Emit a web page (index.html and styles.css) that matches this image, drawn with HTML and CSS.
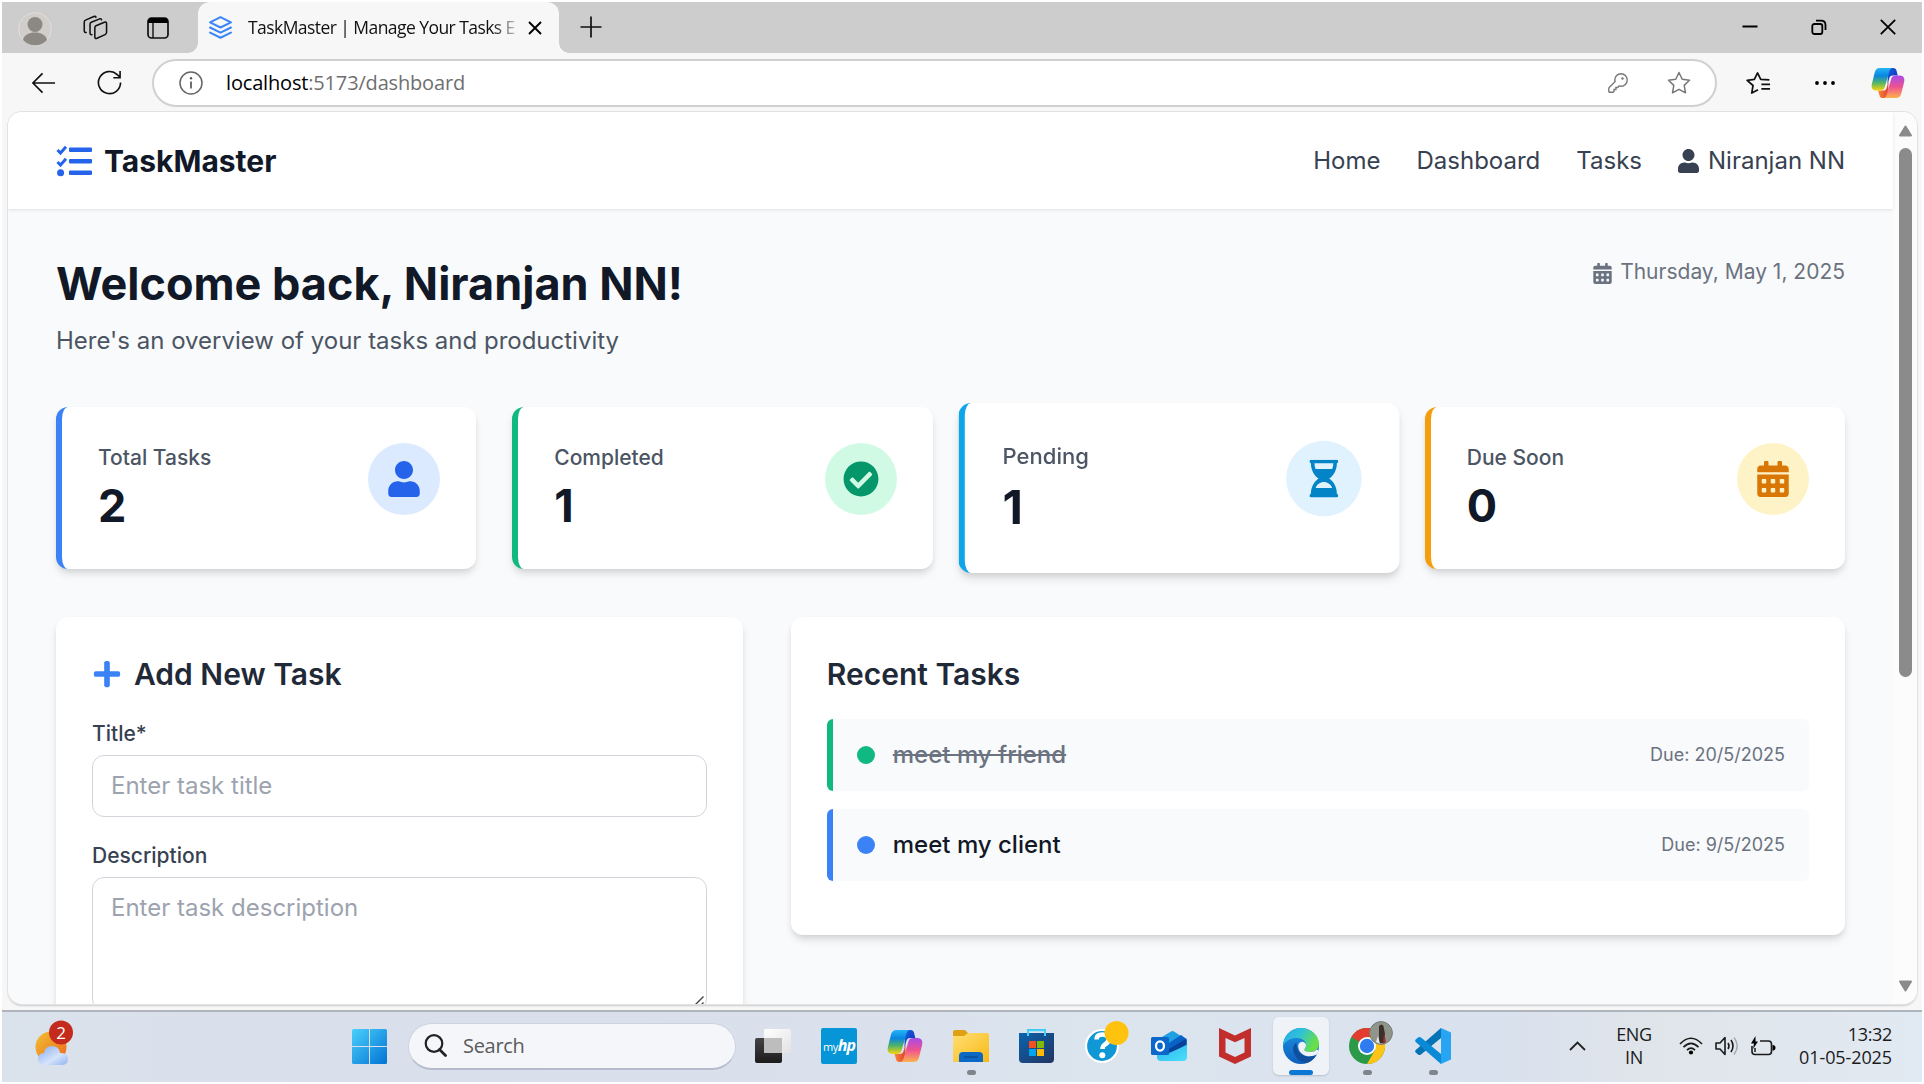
FILE: index.html
```html
<!DOCTYPE html>
<html lang="en">
<head>
<meta charset="utf-8">
<title>TaskMaster | Manage Your Tasks Efficiently</title>
<link rel="stylesheet" href="styles.css">
</head>
<body>
<svg class="defs" width="0" height="0" aria-hidden="true">
  <defs>
    <linearGradient id="cpA" x1="0" y1="0" x2="0" y2="1"><stop offset="0" stop-color="#23b5f5"/><stop offset=".35" stop-color="#0a86e0"/><stop offset=".65" stop-color="#4fb36a"/><stop offset="1" stop-color="#f7d50c"/></linearGradient>
    <linearGradient id="cpB" x1="0" y1="0" x2="0" y2="1"><stop offset="0" stop-color="#a64bea"/><stop offset=".5" stop-color="#ee5290"/><stop offset="1" stop-color="#fdb34d"/></linearGradient>
    <linearGradient id="cpC" x1="0" y1="0" x2="1" y2="1"><stop offset="0" stop-color="#1a5fe0"/><stop offset="1" stop-color="#0a2fb4"/></linearGradient>
    <linearGradient id="cpD" x1="0" y1="0" x2="1" y2="0"><stop offset="0" stop-color="#f9873a"/><stop offset="1" stop-color="#e2402f"/></linearGradient>
    <linearGradient id="sun" x1="0" y1="0" x2="1" y2="1"><stop offset="0" stop-color="#efc232"/><stop offset="1" stop-color="#f0641e"/></linearGradient>
    <linearGradient id="cloud" x1="0" y1="0" x2="1" y2="1"><stop offset="0" stop-color="#86abf0"/><stop offset=".6" stop-color="#d5e3fb"/><stop offset="1" stop-color="#8fb3f0"/></linearGradient>
    <linearGradient id="win" x1="0" y1="0" x2="1" y2="1"><stop offset="0" stop-color="#4bd0fb"/><stop offset="1" stop-color="#0273d4"/></linearGradient>
    <linearGradient id="tvw" x1="0" y1="0" x2="1" y2="1"><stop offset="0" stop-color="#fff"/><stop offset="1" stop-color="#e2e2e2"/></linearGradient>
    <linearGradient id="tvb" x1="0" y1="0" x2="0" y2="1"><stop offset="0" stop-color="#444"/><stop offset="1" stop-color="#1c1c1c"/></linearGradient>
    <linearGradient id="fold" x1="0" y1="0" x2="1" y2="1"><stop offset="0" stop-color="#ffdf75"/><stop offset="1" stop-color="#f9b916"/></linearGradient>
    <linearGradient id="store" x1="0" y1="0" x2="1" y2="1"><stop offset="0" stop-color="#0a63ae"/><stop offset="1" stop-color="#243460"/></linearGradient>
    <linearGradient id="edgeTop" x1="0" y1="0" x2="1" y2=".4"><stop offset="0" stop-color="#2aa7e8"/><stop offset=".5" stop-color="#2fc2d8"/><stop offset="1" stop-color="#69df45"/></linearGradient>
    <linearGradient id="edgeL" x1="0" y1="0" x2="0" y2="1"><stop offset="0" stop-color="#1e93e4"/><stop offset="1" stop-color="#0d60bd"/></linearGradient>
    <linearGradient id="olk" x1="0" y1="0" x2="1" y2="1"><stop offset="0" stop-color="#2bb3ea"/><stop offset="1" stop-color="#4be0fd"/></linearGradient>
    <symbol id="copilot" viewBox="0 0 36 34">
      <path d="M18 1h5.500c2 0 3 1 3.500 2.800L28.300 9H23c-2 0-3 1-3.600 3l-2 7z" fill="url(#cpC)"/>
      <path d="M18 33h-5.500c-2 0-3-1-3.500-2.800L7.500 25H13c2 0 3-1 3.600-3l2-7z" fill="url(#cpD)"/>
      <path d="M9.500 1H23c-2 .3-2.900 1.500-3.500 3.500l-4.700 16.200c-.8 2.800-2 4.300-5 4.300H5.500C1.500 25 0 22 .9 18L4 5.500C4.800 2.500 6.500 1 9.500 1z" fill="url(#cpA)"/>
      <path d="M26.500 33H13c2-.3 2.900-1.500 3.500-3.500l4.700-16.200c.8-2.800 2-4.300 5-4.300h4.300c4 0 5.500 3 4.600 7L32 28.500c-.8 3-2.500 4.500-5.500 4.500z" fill="url(#cpB)"/>
    </symbol>
    <symbol id="user" viewBox="0 0 448 512"><path d="M224 256c70.700 0 128-57.300 128-128S294.700 0 224 0 96 57.300 96 128s57.300 128 128 128zm89.600 32h-16.700c-22.200 10.200-46.900 16-72.900 16s-50.600-5.800-72.900-16h-16.700C60.200 288 0 348.200 0 422.400V464c0 26.500 21.500 48 48 48h352c26.500 0 48-21.500 48-48v-41.600c0-74.200-60.200-134.400-134.400-134.400z"/></symbol>
    <symbol id="calendar" viewBox="0 0 448 512"><path d="M0 464c0 26.500 21.500 48 48 48h352c26.500 0 48-21.500 48-48V192H0v272zm320-196c0-6.600 5.400-12 12-12h40c6.600 0 12 5.400 12 12v40c0 6.600-5.400 12-12 12h-40c-6.600 0-12-5.400-12-12v-40zm0 128c0-6.600 5.400-12 12-12h40c6.600 0 12 5.400 12 12v40c0 6.600-5.400 12-12 12h-40c-6.600 0-12-5.400-12-12v-40zM192 268c0-6.600 5.400-12 12-12h40c6.600 0 12 5.400 12 12v40c0 6.600-5.400 12-12 12h-40c-6.600 0-12-5.400-12-12v-40zm0 128c0-6.600 5.400-12 12-12h40c6.600 0 12 5.400 12 12v40c0 6.600-5.400 12-12 12h-40c-6.600 0-12-5.400-12-12v-40zM64 268c0-6.600 5.400-12 12-12h40c6.600 0 12 5.400 12 12v40c0 6.600-5.400 12-12 12H76c-6.600 0-12-5.400-12-12v-40zm0 128c0-6.600 5.400-12 12-12h40c6.600 0 12 5.400 12 12v40c0 6.600-5.400 12-12 12H76c-6.600 0-12-5.400-12-12v-40zM400 64h-48V16c0-8.800-7.200-16-16-16h-32c-8.800 0-16 7.200-16 16v48H160V16c0-8.800-7.200-16-16-16h-32c-8.800 0-16 7.200-16 16v48H48C21.500 64 0 85.500 0 112v48h448v-48c0-26.500-21.500-48-48-48z"/></symbol>
  </defs>
</svg>

<div class="screen">
  <header class="tabstrip">
    <svg class="avatar" viewBox="0 0 34 34"><circle cx="17" cy="17" r="16.300" fill="#d0cdca" stroke="#e2e0de"/><circle cx="17" cy="12.500" r="7.500" fill="#8c8884"/><path d="M5 28c1-5 6-7.500 12-7.500S28 23 29 28c-3 3.500-7.500 5.300-12 5.300S8 31.500 5 28z" fill="#8c8884"/></svg>
    <svg class="workspaces" viewBox="0 0 26 26"><g fill="none" stroke="#111" stroke-width="1.600" stroke-linejoin="round" stroke-linecap="round"><path d="M13.500 11.200l8.700-3.700q2.300-.7 2.300 1.500v9q0 1.700-1.500 2.400l-8.500 3.800q-2.200.7-2.200-1.500v-9.300q0-1.500 1.200-2.200z"/><path d="M9.300 20.500q-2 .3-2-1.700v-9q0-1.600 1.300-2.200l8.700-3.600q1.700-.5 2 1"/><path d="M3.300 18.200q-2 .2-2-1.700v-9q0-1.600 1.300-2.200L11.300 1.600q1.700-.6 2.200.6"/></g></svg>
    <svg class="vtabs" viewBox="0 0 22 22"><rect x="1" y="1" width="20" height="20" rx="3.500" fill="none" stroke="#111" stroke-width="1.700"/><path d="M1 4.500Q1 1 4.500 1h13Q21 1 21 4.500V6H1z"/><path d="M6 6v15" stroke="#111" stroke-width="1.400"/></svg>
    <div class="tab">
      <svg class="favicon" viewBox="0 0 22 22" fill="none" stroke="#3b86f7" stroke-width="1.900" stroke-linejoin="round" stroke-linecap="round"><path d="M11 1l10 5-10 5L1 6z"/><path d="M1 11l10 5 10-5M1 15.800l10 5 10-5"/></svg>
      <span class="tab-title">TaskMaster | Manage Your Tasks E</span>
      <svg class="tab-close" viewBox="0 0 14 14"><path d="M1 1l12 12M13 1L1 13" stroke="#000" stroke-width="1.900"/></svg>
    </div>
    <svg class="newtab" viewBox="0 0 22 22"><path d="M11 .5v21M.5 11h21" stroke="#111" stroke-width="1.700"/></svg>
    <div class="wincontrols">
      <svg viewBox="0 0 16 16"><path d="M.5 7.500h15" stroke="#000" stroke-width="2"/></svg>
      <svg viewBox="0 0 16 16" fill="none" stroke="#000" stroke-width="1.800"><rect x="1.300" y="5" width="10" height="10" rx="2"/><path d="M5 1.700h5q4.500 0 4.500 4.500V11"/></svg>
      <svg viewBox="0 0 16 16"><path d="M.8.800l14.400 14.400M15.200.8L.8 15.200" stroke="#000" stroke-width="1.800"/></svg>
    </div>
  </header>

  <div class="toolbar">
    <svg class="back" viewBox="0 0 26 22"><path d="M25 11H2M12 1L2 11l10 10" fill="none" stroke="#111" stroke-width="1.700"/></svg>
    <svg class="reload" viewBox="0 0 26 26"><path d="M24.500 13A11.500 11.500 0 1 1 21 4.800L24 7.500M24 1v7h-7" fill="none" stroke="#111" stroke-width="1.700"/></svg>
    <div class="address">
      <svg class="info" viewBox="0 0 24 24"><circle cx="12" cy="12" r="11" fill="none" stroke="#666" stroke-width="1.500"/><path d="M12 10.500v7" stroke="#555" stroke-width="1.700"/><circle cx="12" cy="7.200" r="1.200" fill="#555"/></svg>
      <span class="url">localhost<span class="path">:5173/dashboard</span></span>
      <svg class="key" viewBox="0 0 20 20"><path d="M13 .8a6.200 6.200 0 0 1 0 12.400q-1 0-1.800-.3l-1.400 1.600H7.900v2H6v2l-.8.700H1.500q-.7 0-.7-.7v-3q0-.6.400-1l6-6Q6.800 7.800 6.800 7A6.200 6.200 0 0 1 13 .8z" fill="none" stroke="#777" stroke-width="1.400"/><circle cx="14.500" cy="5.500" r="1.200" fill="#777"/></svg>
      <svg class="star" viewBox="0 0 24 24"><path d="M12 1.500l3.200 6.700 7.300 1-5.300 5.200 1.300 7.400-6.500-3.500-6.500 3.500 1.300-7.400L1.500 9.200l7.300-1z" fill="none" stroke="#777" stroke-width="1.500" stroke-linejoin="round"/></svg>
    </div>
    <svg class="favs" viewBox="0 0 26 24"><path d="M12.500 19l-6.500 3.500 1.300-7.900L1.200 9.200l7.500-1L12 1.500l3.300 6.700 9 .6M16 13.500h9M16 18h9" fill="none" stroke="#111" stroke-width="1.800" stroke-linejoin="round"/></svg>
    <svg class="more" viewBox="0 0 20 4"><circle cx="2" cy="2" r="1.900"/><circle cx="10" cy="2" r="1.900"/><circle cx="18" cy="2" r="1.900"/></svg>
    <svg class="copilot-btn"><use href="#copilot"/></svg>
  </div>

  <div class="viewport">
    <div class="page">
      <nav class="navbar">
        <div class="brand">
          <svg class="brand-icon" viewBox="0 0 36 32"><g fill="#2563eb"><rect x="13" y="2.500" width="23" height="4.600" rx="1"/><rect x="13" y="14" width="23" height="4.600" rx="1"/><rect x="13" y="25.500" width="23" height="4.600" rx="1"/><circle cx="4.600" cy="27.800" r="3.500"/></g><path d="M1.500 5L4.500 8 10 1.800M1.500 17l3 3L10 13.800" fill="none" stroke="#2563eb" stroke-width="3"/></svg>
          <span>TaskMaster</span>
        </div>
        <div class="links">
          <a>Home</a><a>Dashboard</a><a>Tasks</a>
          <a class="profile"><svg><use href="#user"/></svg>Niranjan NN</a>
        </div>
      </nav>
      <main class="content">
        <section class="intro">
          <div>
            <h1>Welcome back, Niranjan NN!</h1>
            <p>Here's an overview of your tasks and productivity</p>
          </div>
          <div class="date"><svg><use href="#calendar"/></svg>Thursday, May 1, 2025</div>
        </section>

        <section class="stats">
          <article class="stat total">
            <div><h2>Total Tasks</h2><strong>2</strong></div>
            <span class="badge"><svg><use href="#user"/></svg></span>
          </article>
          <article class="stat completed">
            <div><h2>Completed</h2><strong>1</strong></div>
            <span class="badge"><svg viewBox="0 0 512 512"><path d="M504 256c0 137-111 248-248 248S8 393 8 256 119 8 256 8s248 111 248 248zM227.300 387.300l184-184c6.200-6.200 6.200-16.400 0-22.600l-22.600-22.600c-6.200-6.200-16.400-6.200-22.600 0L216 308.100l-70.100-70.100c-6.200-6.200-16.400-6.200-22.600 0l-22.600 22.600c-6.200 6.200-6.200 16.400 0 22.600l104 104c6.200 6.200 16.400 6.200 22.600.1z"/></svg></span>
          </article>
          <article class="stat pending">
            <div><h2>Pending</h2><strong>1</strong></div>
            <span class="badge"><svg viewBox="0 0 384 512"><path d="M368 48c8.800 0 16-7.200 16-16V16c0-8.800-7.200-16-16-16H16C7.200 0 0 7.200 0 16v16c0 8.800 7.200 16 16 16 0 91.900 44.200 169.400 104.800 208C60.200 294.600 16 372.100 16 464c-8.800 0-16 7.200-16 16v16c0 8.800 7.200 16 16 16h352c8.800 0 16-7.200 16-16v-16c0-8.800-7.200-16-16-16 0-91.900-44.200-169.400-104.800-208C323.800 217.400 368 139.900 368 48zM304 384H80c16.900-46.400 59.700-80 112-80s95.100 33.600 112 80zm0-256H80c-10.400-24.400-16-51.400-16-80h256c0 28.600-5.600 55.600-16 80z"/></svg></span>
          </article>
          <article class="stat due">
            <div><h2>Due Soon</h2><strong>0</strong></div>
            <span class="badge"><svg><use href="#calendar"/></svg></span>
          </article>
        </section>

        <section class="panels">
          <form class="panel">
            <h3><svg viewBox="0 0 448 512"><path d="M416 208H272V64c0-17.700-14.300-32-32-32h-32c-17.700 0-32 14.300-32 32v144H32c-17.700 0-32 14.300-32 32v32c0 17.700 14.300 32 32 32h144v144c0 17.700 14.300 32 32 32h32c17.700 0 32-14.300 32-32V304h144c17.700 0 32-14.300 32-32v-32c0-17.700-14.300-32-32-32z"/></svg>Add New Task</h3>
            <label>Title*</label>
            <input class="field" type="text" placeholder="Enter task title">
            <label>Description</label>
            <div class="area">
              <textarea class="field" rows="3" placeholder="Enter task description"></textarea>
              <svg class="grip" viewBox="0 0 14 14"><path d="M1.500 12.500l11-11M7.500 12.500l5-5" stroke="#444" stroke-width="1.400"/></svg>
            </div>
          </form>
          <div class="panel recent">
            <h3>Recent Tasks</h3>
            <div class="task done"><i></i><span>meet my friend</span><time>Due: 20/5/2025</time></div>
            <div class="task"><i></i><span>meet my client</span><time>Due: 9/5/2025</time></div>
          </div>
        </section>
      </main>
    </div>
    <div class="scrollbar">
      <svg class="arrow" viewBox="0 0 14 12"><path d="M7 1.500L12.500 10.500h-11z" fill="#8b8b8b" stroke="#8b8b8b" stroke-width="2" stroke-linejoin="round"/></svg>
      <div class="thumb"></div>
      <svg class="arrow" viewBox="0 0 14 12"><path d="M7 10.500L12.500 1.500h-11z" fill="#8b8b8b" stroke="#8b8b8b" stroke-width="2" stroke-linejoin="round"/></svg>
    </div>
  </div>

  <footer class="taskbar">
    <div class="weather">
      <svg viewBox="0 0 40 46"><circle cx="17" cy="27" r="15.500" fill="url(#sun)"/><path d="M11 45q-7 0-7-6.500 0-5 6-5.500Q11 26 18 26q7 0 8 7 8-.5 8 6 0 6-7 6z" fill="url(#cloud)"/><circle cx="27" cy="12.500" r="12" fill="#c42b1c"/></svg>
      <b>2</b>
    </div>
    <svg class="start" viewBox="0 0 35 35"><path d="M1.500 0H17v17H0V1.500Q0 0 1.500 0zM18 0h15.500Q35 0 35 1.500V17H18zM0 18h17v17H1.500Q0 35 0 33.500zM18 18h17v15.500q0 1.500-1.500 1.500H18z" fill="url(#win)"/></svg>
    <div class="search"><svg viewBox="0 0 23 23"><circle cx="10" cy="9.500" r="8.300" fill="none" stroke="#222" stroke-width="2.200"/><path d="M15.500 15.500l6 6" stroke="#222" stroke-width="2.800" stroke-linecap="round"/></svg>Search</div>
    <div class="apps">
      <div class="app"><svg viewBox="0 0 36 36"><path d="M0 12q0-2 2-2h25v23q0 2-2 2H2q-2 0-2-2z" fill="url(#tvb)"/><rect x="9" y="1" width="27" height="24" rx="1.500" fill="url(#tvw)"/><path d="M9 10h18v15H10q-1 0-1-1z" fill="#bdbdbd"/></svg></div>
      <div class="app"><span class="myhp">my<b>hp</b></span></div>
      <div class="app"><svg><use href="#copilot"/></svg></div>
      <div class="app running"><svg viewBox="0 0 36 36"><path d="M0 4q0-2 2-2h10l4 4h18v8H0z" fill="#dfa012"/><path d="M0 8h11l4-3h19q2 0 2 2v27H0z" fill="url(#fold)"/><path d="M6 34V28q0-4 4-4h16q4 0 4 4v6z" fill="#0b68c4"/><path d="M11 29h14" stroke="#0a4d96" stroke-width="1.500"/></svg></div>
      <div class="app"><svg viewBox="0 0 36 36"><path d="M9 9V2h17v7" fill="none" stroke="#25bdf0" stroke-width="2"/><path d="M0 5h35v26q0 4-4 4H4q-4 0-4-4z" fill="url(#store)"/><path d="M9 8V2.200h17V8" fill="none" stroke="#48cff5" stroke-width="2"/><path d="M10 13h7v7h-7z" fill="#f25022"/><path d="M18 13h7v7h-7z" fill="#7fba00"/><path d="M10 21h7v7h-7z" fill="#00a4ef"/><path d="M18 21h7v7h-7z" fill="#ffb900"/></svg></div>
      <div class="app help"><svg viewBox="0 0 44 44"><circle cx="17" cy="26" r="16" fill="#0f97d6" stroke="#fff" stroke-width="2.200"/><path d="M11.500 19.500q0-5 6-5t6 5q0 3-3.500 5-2.500 1.500-2.500 4.500" fill="none" stroke="#fff" stroke-width="4.600"/><circle cx="17.300" cy="35.300" r="3" fill="#fff"/><circle cx="31.500" cy="13" r="12" fill="#ffc20e"/></svg></div>
      <div class="app"><svg viewBox="0 0 36 36"><path d="M6 12L20 3.500q1.500-.8 3 0L36 12v16H6z" fill="#1ea0e2"/><path d="M18 15l12-8 5.500 4L18 22z" fill="#0a62c6"/><path d="M18 21l17.500-10.500v6L18 27z" fill="#06419a"/><path d="M6 27l12-2 18-8v12q0 4-4 4H10q-4 0-4-4z" fill="url(#olk)"/><rect y="9" width="18" height="18" rx="1.500" fill="#0b67c9"/><ellipse cx="9" cy="18" rx="4" ry="4.600" fill="none" stroke="#fff" stroke-width="2.300"/></svg></div>
      <div class="app"><svg viewBox="0 0 36 36"><path d="M2 0l16 7.500L34 0v28.500L18 36 2 28.500zM8.500 10v14.500L18 29l9.500-4.500V10L18 14.300z" fill="#c12e2c" fill-rule="evenodd"/></svg></div>
      <div class="app active running"><svg viewBox="0 0 36 36"><circle cx="18" cy="18" r="18" fill="url(#edgeL)"/><path d="M0 17.500C1 7 8.500 0 18 0c10 0 18 7 18 16 0 5-4 8-9 8-4 0-6-1-6-2s2-2 2-5c0-4-4-7-9-7-6 0-11 2.500-14 7.500z" fill="url(#edgeTop)"/><path d="M13.500 14.500C10 17 9.500 21 11 25c2.500 6.500 8 11 14 9.600 4-1.600 6.500-4.600 8-7.600-4 2-9 2-12.500.5-4.500-2-7.500-7.500-7-13z" fill="#0f4f9e"/><path d="M18.800 13.700q4.200.3 4.200 4-.2 2-1.500 3.300-1 1.200.5 2 2.500 1.200 6 1 4-.5 6-2.600l2 1.600-2.200 3.600q-6 3-12 .8-6-2.500-6.600-8.600-.3-4 3.600-5.100z" fill="#eff3f8"/></svg></div>
      <div class="app running chrome"><svg viewBox="0 0 44 44"><circle cx="18" cy="26" r="18" fill="#2b9a48"/><path d="M18 26L2.400 17A18 18 0 0 1 33.600 17z" fill="#e33b2e"/><path d="M18 17h15.600A18 18 0 0 1 18 44l7.800-13.500z" fill="#fdc315"/><circle cx="18" cy="26" r="9" fill="#fff"/><circle cx="18" cy="26" r="7.200" fill="#2f7cf0"/><circle cx="32" cy="13" r="11.400" fill="#8f958b" stroke="#777b74"/><path d="M30 6q2.500-3 4.500 0l1.500 8-1 9h-5z" fill="#3c2f2c"/><path d="M29 16l-2 6 4 2z" fill="#e9e9e9"/><path d="M35 13l2 9-3 2z" fill="#9c2f33"/></svg></div>
      <div class="app running"><svg viewBox="0 0 36 36"><path d="M26 0l10 4.500v27L26 36z" fill="#27a5f3"/><path d="M26 0v10L6 26.500q-1.500 1-3 0L.7 24.400q-1-1.200 0-2.400z" fill="#0573b4"/><path d="M26 36V26L6 9.500q-1.500-1-3 0L.7 11.600q-1 1.200 0 2.400z" fill="#0a8ad6"/></svg></div>
    </div>
    <div class="tray">
      <svg class="chev" viewBox="0 0 17 10"><path d="M1 9l7.500-7.500L16 9" fill="none" stroke="#222" stroke-width="1.800"/></svg>
      <div class="lang">ENG<br>IN</div>
      <svg class="wifi" viewBox="0 0 24 18"><g fill="none" stroke="#1b1b1b" stroke-width="1.700"><path d="M1 7Q12-4.500 23 7M4.500 10.200Q12 2.500 19.500 10.200M8 13.200q4-4 8 0"/></g><circle cx="12" cy="15.500" r="2.100"/></svg>
      <svg class="sound" viewBox="0 0 24 20"><path d="M1 7h4l5-5.500v17L5 13H1z" fill="none" stroke="#1b1b1b" stroke-width="1.600" stroke-linejoin="round"/><path d="M13 7q2 3 0 6M16 4q4 6 0 12" fill="none" stroke="#1b1b1b" stroke-width="1.600"/><path d="M19 1.500q6.500 8.500 0 17" fill="none" stroke="#aaa" stroke-width="1.500"/></svg>
      <svg class="battery" viewBox="0 0 25 21"><path d="M9 5h8.500q3 0 3 3v7.500q0 3-3 3H4q-3 0-3-3V10" fill="none" stroke="#1b1b1b" stroke-width="1.600"/><path d="M21.500 9q3 0 3 2.800t-3 2.800zM4.500 0L0 7.500h3L2 13l5-7.500H4.500z"/><path d="M4 12v4" stroke="#1b1b1b" stroke-width="1.500"/></svg>
      <div class="clock">13:32<br><span>01-05-2025</span></div>
    </div>
  </footer>
</div>
</body>
</html>
```

FILE: styles.css
```css
* { box-sizing: border-box; }
html, body { margin: 0; height: 100%; overflow: hidden; background: #fff; }
svg { display: block; flex: none; }
h1, h2, h3, p { margin: 0; }
.defs { position: absolute; }

.screen {
  width: 1924px; height: 1084px; padding: 2px;
  display: flex; flex-direction: column;
  font-family: "Open Sans", "Noto Sans", sans-serif;
  background: linear-gradient(#f7f7f7, #f7f7f7) 2px 2px / 1920px 1080px no-repeat #fff;
}

/* Browser chrome */
.tabstrip {
  flex: none; height: 51px; padding: 0 0 2px 16px;
  display: flex; align-items: center; background: #cdcdcd;
}
.avatar { width: 34px; height: 34px; margin-top: 4px; }
.workspaces { width: 25px; height: 25px; margin: 2px 0 0 31px; }
.vtabs { width: 22px; height: 22px; margin: 2px 0 0 39px; }
.tab {
  position: relative; width: 361px; height: 51px; margin: 2px 0 0 29px; padding: 0 17px 2px 11px;
  display: flex; align-items: center; background: #f7f7f7; border-radius: 12px 12px 0 0;
}
.tab::before, .tab::after {
  content: ""; position: absolute; bottom: 0; width: 10px; height: 10px;
}
.tab::before { left: -10px; background: radial-gradient(circle at 0 0, transparent 9.5px, #f7f7f7 10px); }
.tab::after { right: -10px; background: radial-gradient(circle at 100% 0, transparent 9.5px, #f7f7f7 10px); }
.favicon { width: 23px; height: 23px; margin-top: 2px; }
.tab-title {
  flex: none; width: 269px; margin-left: 16px; overflow: hidden;
  font-size: 17.5px; letter-spacing: -.56px; white-space: nowrap; color: #111;
  -webkit-mask-image: linear-gradient(90deg, #000 244px, transparent 275px);
}
.tab-close { width: 14px; height: 14px; margin: 2px 0 0 auto; }
.newtab { width: 22px; height: 22px; margin-left: 21px; }
.wincontrols { margin: 0 26px 0 auto; display: flex; gap: 53px; }
.wincontrols svg { width: 16px; height: 16px; }

.toolbar {
  flex: none; height: 59px; padding: 0 17px 0 29px;
  display: flex; align-items: center; background: #f7f7f7;
}
.back { width: 25px; height: 22px; }
.reload { width: 25px; height: 25px; margin-left: 41px; }
.address {
  width: 1569px; height: 48px; margin-left: 30px; padding: 0 24px 0 25px;
  display: flex; align-items: center; background: #fff;
  border: 2px solid #d0d0d0; border-radius: 24px;
}
.info { width: 24px; height: 24px; }
.url { margin-left: 23px; font-size: 20px; letter-spacing: -.17px; color: #000; }
.path { color: #6f6f6f; }
.key { width: 20px; height: 20px; margin-left: auto; }
.star { width: 24px; height: 24px; margin-left: 39px; }
.favs { width: 25px; height: 24px; margin-left: 29px; }
.more { width: 20px; height: 4px; margin-left: 44px; }
.copilot-btn { width: 34px; height: 34px; margin-left: 36px; }

.viewport {
  flex: none; width: 1909px; height: 892px; margin: 0 0 6px 6px;
  display: flex; overflow: hidden; background: #f9fafb;
  border-radius: 14px; box-shadow: 0 0 0 1px #e2e2e2, 0 2px 2px #ccc;
}
.scrollbar {
  width: 24px; padding: 13px 0 12px; display: flex; flex-direction: column; align-items: center;
  background: #fcfcfc;
}
.arrow { width: 15px; height: 12px; }
.thumb { width: 13px; height: 529px; margin: 11px 0 auto; background: #8b8b8b; border-radius: 7px; }

/* Application page */
.page { width: 1885px; flex: none; font-family: Inter, sans-serif; color: #111827; }
.navbar {
  position: relative; height: 97px; padding: 0 48px; display: flex; align-items: center; justify-content: space-between;
  background: #fff; box-shadow: 0 1px 3px rgba(0,0,0,.1);
}
.brand { display: flex; align-items: center; gap: 12px; font-size: 30px; font-weight: 700; line-height: 42px; }
.brand-icon { width: 36px; height: 32px; }
.links { display: flex; gap: 36px; font-size: 24px; line-height: 36px; color: #374151; }
.profile { display: flex; align-items: center; }
.profile svg { width: 21px; height: 24px; margin-right: 9px; fill: currentColor; }

.content { padding: 48px; }
.intro { display: flex; justify-content: space-between; align-items: flex-start; margin-bottom: 48px; }
h1 { font-size: 45px; line-height: 54px; font-weight: 700; }
.intro p { margin-top: 12px; font-size: 24px; line-height: 36px; color: #4b5563; }
.date { display: flex; align-items: center; font-size: 21px; line-height: 30px; color: #6b7280; }
.date svg { width: 19px; height: 21px; margin: 3px 8px 0 0; fill: currentColor; }

.stats { display: grid; grid-template-columns: repeat(4, 1fr); gap: 36px; margin-bottom: 48px; }
.stat {
  height: 162px; padding: 36px; display: flex; justify-content: space-between; align-items: flex-start;
  background: #fff; border-left: 6px solid; border-radius: 12px;
  box-shadow: 0 6px 9px -1px rgba(0,0,0,.1), 0 3px 6px -2px rgba(0,0,0,.1);
}
.stat h2 { font-size: 21px; line-height: 30px; font-weight: 500; color: #4b5563; }
.stat strong { display: block; margin-top: 6px; font-size: 45px; line-height: 54px; font-weight: 700; color: #111827; }
.badge { width: 72px; height: 72px; border-radius: 50%; display: flex; align-items: center; justify-content: center; }
.badge svg { width: 36px; height: 36px; fill: currentColor; }
.total { border-color: #3b82f6; }
.total .badge { background: #dbeafe; color: #2563eb; }
.completed { border-color: #10b981; }
.completed .badge { background: #d1fae5; color: #059669; }
.pending { border-color: #0ea5e9; transform: scale(1.05); }
.pending .badge { background: #e0f2fe; color: #0284c7; }
.due { border-color: #f59e0b; }
.due .badge { background: #fef3c7; color: #d97706; }

.panels { display: grid; grid-template-columns: 686.8px 1fr; gap: 48px; align-items: start; }
.panel {
  padding: 36px; background: #fff; border-radius: 12px;
  box-shadow: 0 6px 9px -1px rgba(0,0,0,.1), 0 3px 6px -2px rgba(0,0,0,.1);
}
.panel h3 { display: flex; align-items: center; margin-bottom: 24px; font-size: 30px; line-height: 42px; font-weight: 600; color: #1f2937; }
.panel h3 svg { width: 30px; height: 30px; margin-right: 12px; fill: #3b82f6; }
label { display: block; margin-bottom: 6px; font-size: 21px; line-height: 30px; font-weight: 500; color: #374151; }
.field {
  display: block; width: 100%; margin: 0 0 24px; padding: 12px 18px;
  font: 24px/36px Inter, sans-serif; color: #111827; background: #fff;
  border: 1px solid #d1d5db; border-radius: 12px; resize: none; overflow: hidden;
}
input.field { height: 62px; padding: 11px 18px 13px; }
textarea.field { height: 134px; }
.field::placeholder { color: #9ca3af; opacity: 1; }
.area { position: relative; }
.grip { position: absolute; right: 2px; bottom: 2px; width: 14px; height: 14px; }

.recent { height: 318px; }
.task {
  height: 72px; margin-bottom: 18px; padding: 0 24px; display: flex; align-items: center;
  background: #f9fafb; border-left: 6px solid #3b82f6; border-radius: 6px;
  font-size: 24px; color: #1f2937;
}
.task i { width: 18px; height: 18px; margin-right: 18px; border-radius: 50%; background: #3b82f6; }
.task span { padding-bottom: 1px; font-weight: 500; color: #111827; }
.task time { margin-left: auto; padding-bottom: 1px; font-size: 18px; color: #6b7280; }
.task.done { border-color: #10b981; }
.done i { background: #10b981; }
.task.done span { color: #6b7280; text-decoration: line-through; }

/* Windows taskbar */
.taskbar {
  flex: none; height: 72px; padding: 0 0 2px 32px; display: flex; align-items: center;
  border-top: 2px solid #b0b4bc;
  background: linear-gradient(90deg, #dae2ec 0, #d9dfeb 20%, #dae1ed 45%, #dce5ee 60%, #d9e1ee 78%, #e0e5ea 86%, #e1e9f2 100%);
}
.weather { position: relative; width: 40px; height: 46px; margin-bottom: 6px; }
.weather svg { width: 40px; height: 46px; }
.weather b {
  position: absolute; left: 15px; top: 0; width: 24px; text-align: center;
  font-size: 17px; line-height: 25px; font-weight: 400; color: #fff;
}
.start { width: 35px; height: 35px; margin-left: 278px; }
.search {
  width: 328px; height: 47px; margin-left: 21px; padding-left: 15px; display: flex; align-items: center; gap: 16px;
  background: #f4f6fa; border: 1px solid #cdd4e0; border-bottom: 2px solid #b4bccb; border-radius: 24px;
  font-size: 20px; letter-spacing: -.3px; color: #5b5b5b;
}
.search svg { width: 23px; height: 23px; }
.apps { display: flex; gap: 10px; margin-left: 9px; }
.app {
  position: relative; width: 56px; height: 58px; display: flex; align-items: center; justify-content: center;
  border-radius: 6px;
}
.app svg { width: 36px; height: 36px; }
.app.help svg, .app.chrome svg { width: 44px; height: 44px; margin: -8px -8px 0 0; }
.app.active { background: #eff3f8; box-shadow: 0 1px 2px #b9c0cc; }
.app.running::after {
  content: ""; position: absolute; bottom: 0; left: 24px; width: 9px; height: 5px;
  border-radius: 3px; background: #80858b;
}
.app.active::after { left: 16px; width: 24px; background: #0a78d4; }
.myhp {
  width: 36px; height: 36px; background: #0696d7; border-radius: 2px; color: #fff;
  font-size: 11px; line-height: 35px; text-align: center; letter-spacing: -.4px;
}
.myhp b { font-size: 16px; font-style: italic; letter-spacing: -1px; }
.tray { margin: 0 30px 0 auto; display: flex; align-items: center; color: #1b1b1b; font-size: 18px; line-height: 23px; }
.chev { width: 17px; height: 10px; }
.lang { width: 40px; margin-left: 28px; text-align: center; letter-spacing: -.3px; }
.wifi { width: 24px; height: 18px; margin-left: 25px; }
.sound { width: 24px; height: 20px; margin-left: 12px; }
.battery { width: 25px; height: 21px; margin-left: 12px; }
.clock { width: 110px; margin-left: 6px; text-align: right; letter-spacing: -.35px; white-space: nowrap; }
.clock span { letter-spacing: -.1px; }
```
